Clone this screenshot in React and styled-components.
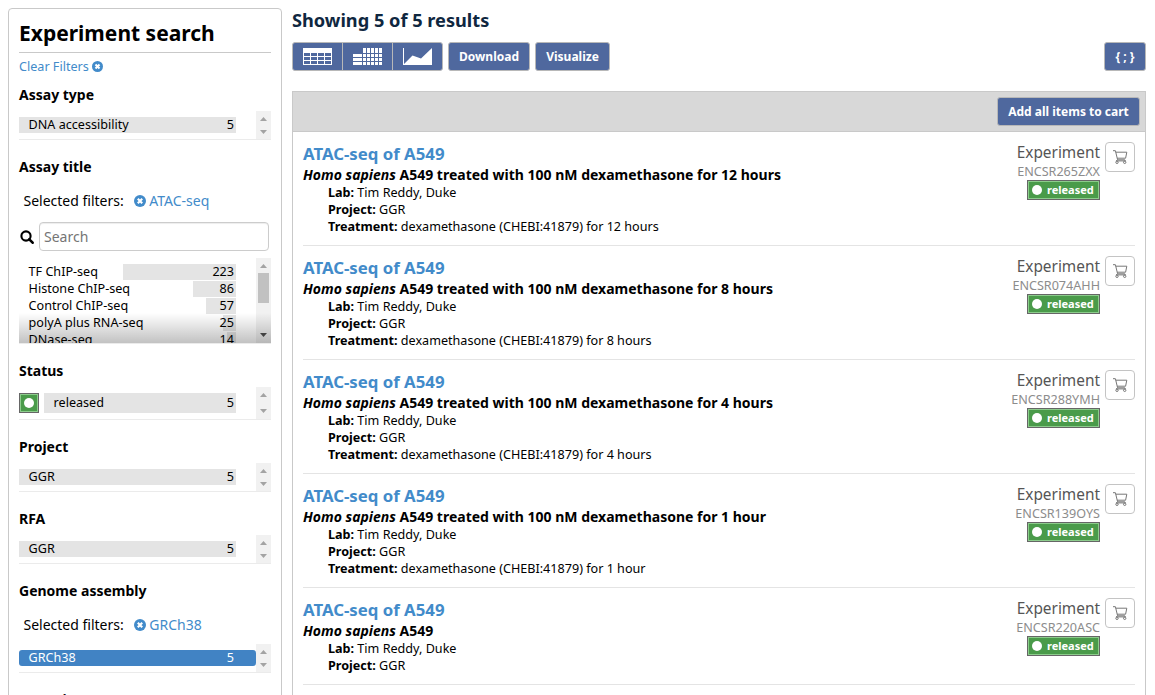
import React from 'react';
import styled, { createGlobalStyle } from 'styled-components';

const Global = createGlobalStyle`
  * { box-sizing: border-box; }
  html, body { margin: 0; height: 695px; overflow: hidden; background: #fff; }
  body { font-family: "Noto Sans", sans-serif; font-size: 12.6px; color: #000; }
`;

const Page = styled.div`
  display: flex;
  align-items: flex-start;
  gap: 10px;
  height: 695px;
  padding: 8px 9px 0 8px;
  overflow: hidden;
`;

const Sidebar = styled.aside`
  flex: 0 0 274px;
  height: 760px;
  padding: 0 10px;
  border: 1px solid #c9c9c9;
  border-radius: 4px;
`;

const SidebarTitle = styled.h1`
  height: 44px;
  margin: 0;
  padding-top: 9px;
  border-bottom: 1px solid #c9c9c9;
  font-size: 21px;
  line-height: 30px;
  font-weight: 700;
`;

const ClearFilters = styled.a`
  display: flex;
  align-items: center;
  gap: 3px;
  height: 32px;
  padding-bottom: 5px;
  color: #428bca;
  font-size: 12.6px;
`;

const Facet = styled.section`
  margin-bottom: 17px;
`;

const FacetTitle = styled.h2`
  margin: 0 0 6px;
  font-size: 14px;
  line-height: 20px;
  font-weight: 700;
`;

const Selected = styled.div`
  display: flex;
  align-items: center;
  height: 37px;
  padding: 0 0 1px 4.5px;
  margin-bottom: ${(p) => (p.$search ? '3px' : '0')};
  font-size: 14px;
  line-height: 20px;
`;

const SelectedLink = styled.a`
  display: flex;
  align-items: center;
  gap: 3.5px;
  margin-left: 10px;
  color: #428bca;
`;

const SearchRow = styled.div`
  display: flex;
  align-items: center;
  gap: 5px;
  height: 29px;
  margin: -1px 2px 7px 1px;
`;

const SearchInput = styled.input`
  flex: 1;
  min-width: 0;
  height: 29px;
  padding: 0 4px;
  border: 1px solid #ccc;
  border-radius: 4px;
  box-shadow: inset 0 1px 1px rgba(0, 0, 0, 0.075);
  font: 14px "Noto Sans", sans-serif;
  &::placeholder { color: #757575; }
`;

const TermBox = styled.div`
  position: relative;
  display: flex;
  height: ${(p) => p.$height || 29}px;
  border-bottom: 1px solid #ebebeb;
  overflow: hidden;
`;

const Terms = styled.div`
  flex: 1;
  padding-top: 6px;
`;

const Term = styled.div`
  display: flex;
  align-items: center;
  gap: 5px;
  height: ${(p) => (p.$tall ? 20 : 16)}px;
  margin: 0 ${(p) => (p.$active ? 0 : 20)}px 1px 0;
`;

const TermBody = styled.div`
  flex: 1;
  display: flex;
  justify-content: space-between;
  align-items: flex-start;
  height: 100%;
  padding: 0 ${(p) => (p.$active ? 22 : 2)}px 0 9.6px;
  border-radius: ${(p) => (p.$active ? 3 : 0)}px;
  color: ${(p) => (p.$active ? '#fff' : '#000')};
  background: ${(p) =>
    p.$active
      ? '#4183c4'
      : `linear-gradient(#e4e4e4, #e4e4e4) right / ${p.$bar}px 100% no-repeat`};
  font-size: 12.6px;
  line-height: ${(p) => (p.$tall ? 20 : 16)}px;
`;

const Fade = styled.div`
  position: absolute;
  left: 0;
  right: 0;
  bottom: 0;
  height: 30px;
  background: linear-gradient(rgba(0, 0, 0, 0), rgba(0, 0, 0, 0.24));
`;

const ScrollTrack = styled.div`
  display: flex;
  flex-direction: column;
  justify-content: space-between;
  align-items: center;
  flex: 0 0 15px;
  padding: 6px 0 ${(p) => (p.$roomy ? 6 : 5)}px;
  background: #f1f1f1;
`;

const Thumb = styled.div`
  width: 11px;
  height: 30px;
  margin: 5px 0 auto;
  background: #c1c1c1;
`;

const Arrow = styled.svg`
  display: block;
  width: 7px;
  height: 4px;
  flex: none;
  fill: ${(p) => (p.$dark ? '#505050' : '#a3a3a3')};
`;

const GreenDot = styled.span`
  display: flex;
  align-items: center;
  justify-content: center;
  flex: none;
  width: 20px;
  height: 20px;
  border: 1px solid #666;
  background: #4a9b4a;
  box-shadow: inset 0 0 0 1px #8ccc8c;
`;

const Dot = styled.span`
  width: 10px;
  height: 10px;
  border-radius: 50%;
  background: #fff;
`;

const Main = styled.main`
  flex: 1;
  min-width: 0;
`;

const ResultCount = styled.h2`
  height: 26px;
  margin: 0 0 8px;
  color: #0f2740;
  font-size: 18.2px;
  line-height: 24px;
  font-weight: 700;
`;

const Toolbar = styled.div`
  display: flex;
  gap: 5px;
  height: 29px;
  margin-bottom: 20px;
`;

const Button = styled.button`
  height: 29px;
  width: ${(p) => p.$width}px;
  padding: 0 0 1px;
  border: 1px solid #b8b8b8;
  border-radius: 3px;
  background: #4f689e;
  color: #fff;
  font: 700 12px "Noto Sans", sans-serif;
  white-space: pre;
`;

const ViewGroup = styled.div`
  display: flex;
  width: 151px;
  border: 1px solid #b8b8b8;
  border-radius: 3px;
  background: #4f689e;
`;

const ViewButton = styled.div`
  display: flex;
  align-items: center;
  justify-content: center;
  flex: 1;
  & + & { border-left: 1px solid #b8b8b8; }
`;

const Spacer = styled.div`
  flex: 1;
`;

const Panel = styled.div`
  height: 640px;
  border: 1px solid #c9c9c9;
`;

const CartBar = styled.div`
  display: flex;
  justify-content: flex-end;
  align-items: center;
  height: 40px;
  padding: 0 5px;
  border-bottom: 1px solid #c9c9c9;
  background: #d8d8d8;
`;

const Result = styled.article`
  display: flex;
  height: ${(p) => (p.$short ? 97 : 114)}px;
  margin: 0 10px;
  padding-top: 10px;
  border-bottom: 1px solid #e4e4e4;
`;

const ResultText = styled.div`
  flex: 1;
`;

const ResultTitle = styled.a`
  display: block;
  height: 23px;
  color: #428bca;
  font-size: 16.8px;
  line-height: 24px;
  font-weight: 700;
`;

const Summary = styled.div`
  height: 19px;
  font-size: 14px;
  line-height: 19px;
  font-weight: 700;
`;

const Detail = styled.div`
  padding-left: 25px;
  font-size: 12.6px;
  line-height: 17px;
  strong { font-weight: 700; }
`;

const Meta = styled.div`
  display: flex;
  flex-direction: column;
  align-items: flex-end;
  margin-right: 5px;
`;

const MetaType = styled.div`
  height: 21px;
  color: #555;
  font-size: 15.4px;
  line-height: 22px;
`;

const Accession = styled.div`
  height: 17px;
  color: #8c8c8c;
  font-size: 12.6px;
  line-height: 17px;
`;

const Badge = styled.div`
  display: flex;
  align-items: center;
  gap: 5px;
  width: 73px;
  height: 20px;
  padding-left: 4px;
  border: 1px solid #666;
  background: #4a9b4a;
  box-shadow: inset 0 0 0 1px #8ccc8c;
  color: #fff;
  font-size: 11px;
  line-height: 18px;
  font-weight: 700;
`;

const CartButton = styled.div`
  display: flex;
  align-items: center;
  justify-content: center;
  width: 30px;
  height: 30px;
  border: 1px solid #c4c4c4;
  border-radius: 4px;
`;

const RemoveIcon = ({ size }) => (
  <svg width={size} height={size} viewBox="0 0 12 12">
    <circle cx="6" cy="6" r="6" fill="#428bca" />
    <path d="M3.8 3.8L8.2 8.2M8.2 3.8L3.8 8.2" stroke="#fff" strokeWidth="2.2" />
  </svg>
);

const SearchIcon = () => (
  <svg width="14" height="14" viewBox="0 0 14 14" fill="none" stroke="#000">
    <circle cx="6" cy="6" r="4.6" strokeWidth="2.1" />
    <path d="M9.3 9.3L12.6 12.7" strokeWidth="2.6" strokeLinecap="round" />
  </svg>
);

const TableIcon = () => (
  <svg width="29" height="17" viewBox="0 0 29 17" shapeRendering="crispEdges">
    <path
      fill="#fff"
      fillRule="evenodd"
      d="M0 0H29V17H0Z M1 5h6v3h-6z M8 5h6v3h-6z M15 5h6v3h-6z M22 5h6v3h-6z M1 9h6v3h-6z M8 9h6v3h-6z M15 9h6v3h-6z M22 9h6v3h-6z M1 13h6v3h-6z M8 13h6v3h-6z M15 13h6v3h-6z M22 13h6v3h-6z"
    />
  </svg>
);

const MatrixIcon = () => (
  <svg width="29" height="17" viewBox="0 0 29 17" shapeRendering="crispEdges" fill="#fff">
    {[6, 10, 14].map((y) => <rect key={y} x="0" y={y} width="9" height="3" />)}
    {[10, 14, 18, 22, 26].map((x) => (
      <React.Fragment key={x}>
        <rect x={x} y="0" width="3" height="5" />
        {[6, 10, 14].map((y) => <rect key={y} x={x} y={y} width="3" height="3" />)}
      </React.Fragment>
    ))}
  </svg>
);

const ReportIcon = () => (
  <svg width="29" height="17" viewBox="0 0 29 17" fill="#fff">
    <path d="M0 0H1V16L9.5 7.5L18 10.5L29 0V17H0Z" />
  </svg>
);

const CartIcon = () => (
  <svg width="16" height="16" viewBox="0 0 16 16" fill="none" stroke="#777" strokeLinejoin="round">
    <path d="M1 1.7H3.4L5.5 10.5M3.8 3.2H14.8L13.6 9.2H5.2M5.5 10.5L4.4 11.9H13.4L12.8 10.8H5.5" />
    <circle cx="5" cy="13.3" r="1.2" />
    <circle cx="12.7" cy="13.3" r="1.2" />
  </svg>
);

const Scrollbar = ({ scrollable, roomy }) => (
  <ScrollTrack $roomy={roomy}>
    <Arrow viewBox="0 0 7 4"><path d="M3.5 0L7 4H0Z" /></Arrow>
    {scrollable && <Thumb />}
    <Arrow viewBox="0 0 7 4" $dark={scrollable}><path d="M0 0H7L3.5 4Z" /></Arrow>
  </ScrollTrack>
);

const facets = [
  { title: 'Assay type', terms: [['DNA accessibility', 5, 217]] },
  {
    title: 'Assay title',
    selected: 'ATAC-seq',
    search: true,
    height: 86,
    terms: [
      ['TF ChIP-seq', 223, 113],
      ['Histone ChIP-seq', 86, 43],
      ['Control ChIP-seq', 57, 30],
      ['polyA plus RNA-seq', 25, 13],
      ['DNase-seq', 14, 9],
    ],
  },
  { title: 'Status', status: true, height: 33, terms: [['released', 5, 192]] },
  { title: 'Project', terms: [['GGR', 5, 217]] },
  { title: 'RFA', terms: [['GGR', 5, 217]] },
  { title: 'Genome assembly', selected: 'GRCh38', active: true, terms: [['GRCh38', 5, 217]] },
  { title: 'Organism', terms: [['Homo sapiens', 5, 217]] },
];

const results = [
  { id: 'ENCSR265ZXX', time: '12 hours' },
  { id: 'ENCSR074AHH', time: '8 hours' },
  { id: 'ENCSR288YMH', time: '4 hours' },
  { id: 'ENCSR139OYS', time: '1 hour' },
  { id: 'ENCSR220ASC' },
];

const FacetBlock = ({ facet }) => (
  <Facet>
    <FacetTitle>{facet.title}</FacetTitle>
    {facet.selected && (
      <Selected $search={facet.search}>
        Selected filters:
        <SelectedLink><RemoveIcon size={12} />{facet.selected}</SelectedLink>
      </Selected>
    )}
    {facet.search && (
      <SearchRow>
        <SearchIcon />
        <SearchInput placeholder="Search" />
      </SearchRow>
    )}
    <TermBox $height={facet.height}>
      <Terms>
        {facet.terms.map(([name, count, bar]) => (
          <Term key={name} $tall={facet.status} $active={facet.active}>
            {facet.status && <GreenDot><Dot /></GreenDot>}
            <TermBody $bar={bar} $tall={facet.status} $active={facet.active}>
              <span>{name}</span>
              <span>{count}</span>
            </TermBody>
          </Term>
        ))}
      </Terms>
      <Scrollbar scrollable={facet.search} roomy={facet.search || facet.status} />
      {facet.search && <Fade />}
    </TermBox>
  </Facet>
);

const ResultItem = ({ result }) => (
  <Result $short={!result.time}>
    <ResultText>
      <ResultTitle>ATAC-seq of A549</ResultTitle>
      <Summary>
        <em>Homo sapiens</em> A549{result.time && ` treated with 100 nM dexamethasone for ${result.time}`}
      </Summary>
      <Detail><strong>Lab:</strong> Tim Reddy, Duke</Detail>
      <Detail><strong>Project:</strong> GGR</Detail>
      {result.time && (
        <Detail><strong>Treatment:</strong> dexamethasone (CHEBI:41879) for {result.time}</Detail>
      )}
    </ResultText>
    <Meta>
      <MetaType>Experiment</MetaType>
      <Accession>{result.id}</Accession>
      <Badge><Dot />released</Badge>
    </Meta>
    <CartButton><CartIcon /></CartButton>
  </Result>
);

export default function App() {
  return (
    <Page>
      <Global />
      <Sidebar>
        <SidebarTitle>Experiment search</SidebarTitle>
        <ClearFilters>Clear Filters <RemoveIcon size={11} /></ClearFilters>
        {facets.map((f) => <FacetBlock key={f.title} facet={f} />)}
      </Sidebar>
      <Main>
        <ResultCount>Showing 5 of 5 results</ResultCount>
        <Toolbar>
          <ViewGroup>
            <ViewButton><TableIcon /></ViewButton>
            <ViewButton><MatrixIcon /></ViewButton>
            <ViewButton><ReportIcon /></ViewButton>
          </ViewGroup>
          <Button $width={82}>Download</Button>
          <Button $width={75}>Visualize</Button>
          <Spacer />
          <Button $width={42}>{'{ ; }'}</Button>
        </Toolbar>
        <Panel>
          <CartBar><Button $width={143}>Add all items to cart</Button></CartBar>
          {results.map((r) => <ResultItem key={r.id} result={r} />)}
        </Panel>
      </Main>
    </Page>
  );
}
